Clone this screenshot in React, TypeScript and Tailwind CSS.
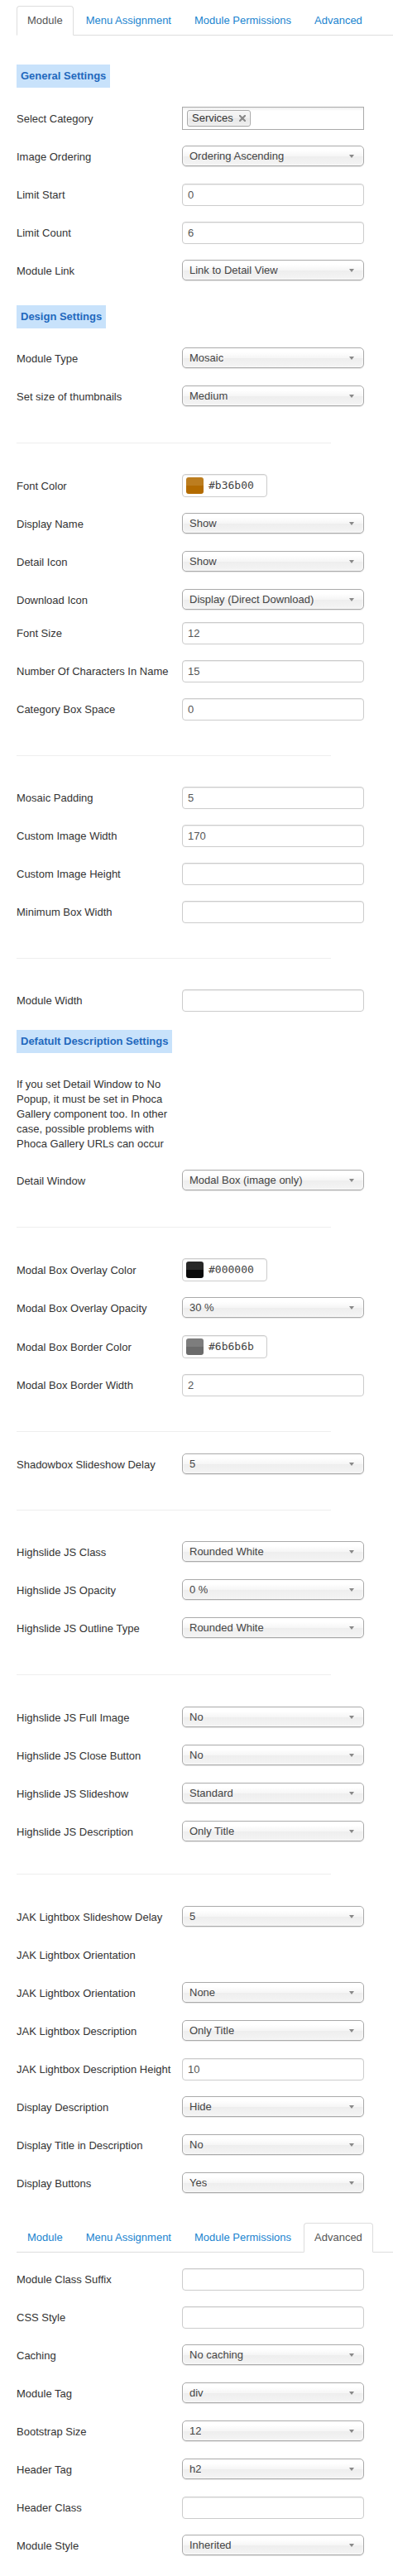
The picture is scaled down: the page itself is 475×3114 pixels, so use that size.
import type { ReactNode } from "react";

type Field =
  | { kind: "select"; label: string; value: string; slot?: string }
  | { kind: "input"; label: string; value?: string }
  | { kind: "color"; label: string; value: string; swatch: string }
  | { kind: "chosen"; label: string; value: string }
  | { kind: "label"; label: string };

const TABS = ["Module", "Menu Assignment", "Module Permissions", "Advanced"];

function Tabs({ active }: { active: string }) {
  return (
    <ul className="flex border-b border-[#ddd]">
      {TABS.map((tab) => (
        <li key={tab} className="-mb-px mr-[2px]">
          <span
            className={`block rounded-t-[4px] border px-3 py-2 text-[13px] leading-[18px] ${
              tab === active
                ? "border-[#ddd] border-b-white bg-white text-[#555]"
                : "border-transparent text-[#1a84cf]"
            }`}
          >
            {tab}
          </span>
        </li>
      ))}
    </ul>
  );
}

function Heading({ children, className = "" }: { children: ReactNode; className?: string }) {
  return (
    <div
      className={`w-fit bg-[#c8e2fb] p-[5px] text-[13px] font-bold leading-[18px] text-[#1f68bd] ${className}`}
    >
      {children}
    </div>
  );
}

function Divider({ className = "" }: { className?: string }) {
  return <div className={`h-px w-[380px] bg-[#eee] ${className}`} />;
}

function RemoveIcon() {
  return (
    <svg width="8" height="8" viewBox="0 0 8 8" className="shrink-0">
      <path d="M1 1 7 7M7 1 1 7" stroke="#888" strokeWidth="2.2" strokeLinecap="square" />
    </svg>
  );
}

function Control({ field }: { field: Field }) {
  switch (field.kind) {
    case "select":
      return (
        <div className="flex h-[25px] w-[220px] items-center rounded-[5px] border border-[#aaa] bg-[linear-gradient(#fff_20%,#f6f6f6_50%,#eee_52%,#f4f4f4_100%)] pl-[8px] pt-px text-[13px] text-[#444] shadow-[inset_0_0_3px_#fff,0_1px_1px_rgba(0,0,0,0.1)]">
          <span className="truncate">{field.value}</span>
          <span className="ml-auto mr-[11px] h-0 w-0 border-x-[3px] border-t-[4px] border-x-transparent border-t-[#888]" />
        </div>
      );
    case "input":
      return (
        <div className="flex h-[27px] w-[220px] items-center rounded-[4px] border border-[#ccc] bg-white px-[6px] text-[13px] text-[#555] shadow-[inset_0_1px_1px_rgba(0,0,0,0.075)]">
          {field.value}
        </div>
      );
    case "color":
      return (
        <div className="flex h-[28px] w-[103px] items-center rounded-[4px] border border-[#ccc] bg-white pl-[4px] shadow-[inset_0_1px_1px_rgba(0,0,0,0.075)]">
          <span
            className={`h-[20px] w-[21px] rounded-[3px] ${field.swatch} bg-[linear-gradient(rgba(255,255,255,0.12)_50%,transparent_50%)]`}
          />
          <span className="ml-[6px] font-['DejaVu_Sans_Mono',monospace] text-[13px] text-[#444]">
            {field.value}
          </span>
        </div>
      );
    case "chosen":
      return (
        <div className="flex h-[28px] w-[220px] items-center border border-[#aaa] bg-[linear-gradient(#eee_1%,#fff_15%)] pl-[5px]">
          <span className="flex h-[20px] items-center gap-[7px] rounded-[3px] border border-[#aaa] bg-[linear-gradient(#f4f4f4_20%,#f0f0f0_50%,#e8e8e8_52%,#eee_100%)] px-[5px] text-[13px] text-[#333] shadow-[inset_0_0_2px_#fff,0_1px_0_rgba(0,0,0,0.05)]">
            {field.value}
            <RemoveIcon />
          </span>
        </div>
      );
    default:
      return null;
  }
}

function FieldRow({ field }: { field: Field }) {
  const slot =
    field.kind === "chosen" || field.kind === "color"
      ? "h-[47px]"
      : field.kind === "select" && field.slot
        ? field.slot
        : "h-[46px]";
  return (
    <div className={`flex ${slot}`}>
      <div
        className={`flex w-[200px] shrink-0 items-center whitespace-nowrap text-[13px] text-[#333] ${
          field.kind === "chosen" || field.kind === "color" ? "h-[29px]" : "h-[27px]"
        }`}
      >
        {field.label}
      </div>
      <Control field={field} />
    </div>
  );
}

function Group({ fields, className = "" }: { fields: Field[]; className?: string }) {
  return (
    <div className={className}>
      {fields.map((field, i) => (
        <FieldRow key={`${field.label}-${i}`} field={field} />
      ))}
    </div>
  );
}

const general: Field[] = [
  { kind: "chosen", label: "Select Category", value: "Services" },
  { kind: "select", label: "Image Ordering", value: "Ordering Ascending" },
  { kind: "input", label: "Limit Start", value: "0" },
  { kind: "input", label: "Limit Count", value: "6" },
  { kind: "select", label: "Module Link", value: "Link to Detail View" },
];

const design: Field[] = [
  { kind: "select", label: "Module Type", value: "Mosaic" },
  { kind: "select", label: "Set size of thumbnails", value: "Medium" },
];

const display: Field[] = [
  { kind: "color", label: "Font Color", value: "#b36b00", swatch: "bg-[#b36b00]" },
  { kind: "select", label: "Display Name", value: "Show" },
  { kind: "select", label: "Detail Icon", value: "Show" },
  { kind: "select", label: "Download Icon", value: "Display (Direct Download)", slot: "h-[40px]" },
  { kind: "input", label: "Font Size", value: "12" },
  { kind: "input", label: "Number Of Characters In Name", value: "15" },
  { kind: "input", label: "Category Box Space", value: "0" },
];

const mosaic: Field[] = [
  { kind: "input", label: "Mosaic Padding", value: "5" },
  { kind: "input", label: "Custom Image Width", value: "170" },
  { kind: "input", label: "Custom Image Height" },
  { kind: "input", label: "Minimum Box Width" },
];

const modal: Field[] = [
  { kind: "color", label: "Modal Box Overlay Color", value: "#000000", swatch: "bg-[#0a0a0a]" },
  { kind: "select", label: "Modal Box Overlay Opacity", value: "30 %" },
  { kind: "color", label: "Modal Box Border Color", value: "#6b6b6b", swatch: "bg-[#6b6b6b]" },
  { kind: "input", label: "Modal Box Border Width", value: "2" },
];

const highslide: Field[] = [
  { kind: "select", label: "Highslide JS Class", value: "Rounded White" },
  { kind: "select", label: "Highslide JS Opacity", value: "0 %" },
  { kind: "select", label: "Highslide JS Outline Type", value: "Rounded White" },
];

const highslideMore: Field[] = [
  { kind: "select", label: "Highslide JS Full Image", value: "No" },
  { kind: "select", label: "Highslide JS Close Button", value: "No" },
  { kind: "select", label: "Highslide JS Slideshow", value: "Standard" },
  { kind: "select", label: "Highslide JS Description", value: "Only Title" },
];

const jak: Field[] = [
  { kind: "select", label: "JAK Lightbox Slideshow Delay", value: "5" },
  { kind: "label", label: "JAK Lightbox Orientation" },
  { kind: "select", label: "JAK Lightbox Orientation", value: "None" },
  { kind: "select", label: "JAK Lightbox Description", value: "Only Title" },
  { kind: "input", label: "JAK Lightbox Description Height", value: "10" },
  { kind: "select", label: "Display Description", value: "Hide" },
  { kind: "select", label: "Display Title in Description", value: "No" },
  { kind: "select", label: "Display Buttons", value: "Yes" },
];

const advanced: Field[] = [
  { kind: "input", label: "Module Class Suffix" },
  { kind: "input", label: "CSS Style" },
  { kind: "select", label: "Caching", value: "No caching" },
  { kind: "select", label: "Module Tag", value: "div" },
  { kind: "select", label: "Bootstrap Size", value: "12" },
  { kind: "select", label: "Header Tag", value: "h2" },
  { kind: "input", label: "Header Class" },
  { kind: "select", label: "Module Style", value: "Inherited" },
];

export default function App() {
  return (
    <div className="w-[475px] bg-white pb-[4px] pl-5 pt-[7px] font-['Liberation_Sans',Arial,sans-serif] text-[#333]">
      <Tabs active="Module" />

      <Heading className="mt-[35px]">General Settings</Heading>
      <Group fields={general} className="mt-[23px]" />

      <Heading className="mt-[9px]">Design Settings</Heading>
      <Group fields={design} className="mt-[23px]" />

      <Divider className="mt-[23px]" />
      <Group fields={display} className="mt-[37px]" />

      <Divider className="mt-[23px]" />
      <Group fields={mosaic} className="mt-[37px]" />

      <Divider className="mt-[23px]" />
      <Group fields={[{ kind: "input", label: "Module Width" }]} className="mt-[37px]" />

      <Heading className="mt-[3px]">Defatult Description Settings</Heading>
      <p className="mt-[29px] w-[200px] text-[13px] leading-[18px] text-[#333]">
        If you set Detail Window to No Popup, it must be set in Phoca Gallery component too. In
        other case, possible problems with Phoca Gallery URLs can occur
      </p>
      <Group
        fields={[{ kind: "select", label: "Detail Window", value: "Modal Box (image only)" }]}
        className="mt-[22px]"
      />

      <Divider className="mt-[23px]" />
      <Group fields={modal} className="mt-[37px]" />

      <Divider className="mt-[23px]" />
      <Group
        fields={[{ kind: "select", label: "Shadowbox Slideshow Delay", value: "5" }]}
        className="mt-[26px]"
      />

      <Divider className="mt-[22px]" />
      <Group fields={highslide} className="mt-[37px]" />

      <Divider className="mt-[23px]" />
      <Group fields={highslideMore} className="mt-[38px]" />

      <Divider className="mt-[18px]" />
      <Group fields={jak} className="mt-[38px]" />

      <div className="mt-[15px]">
        <Tabs active="Advanced" />
      </div>
      <Group fields={advanced} className="mt-[19px]" />
    </div>
  );
}
